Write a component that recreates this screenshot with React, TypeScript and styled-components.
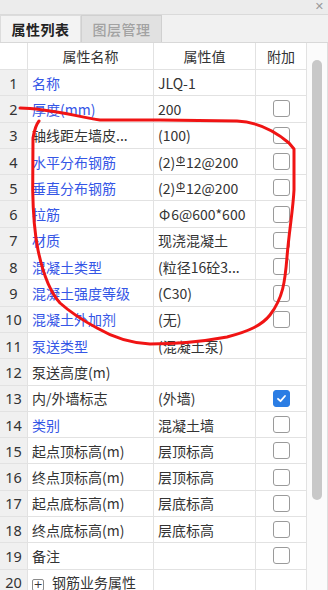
import React from "react";
import styled, { createGlobalStyle } from "styled-components";

const Global = createGlobalStyle`
  html, body { margin: 0; padding: 0; background: #ffffff; }
  body { font-family: "Noto Sans CJK SC", "Microsoft YaHei", "Noto Sans", sans-serif; }
`;

const Panel = styled.div`
  position: relative;
  width: 328px;
  height: 590px;
  overflow: hidden;
  background: #ffffff;
  font-size: 14px;
  color: #333;
`;

const TitleBar = styled.div`
  height: 14px;
  background: #ececec;
  border-bottom: 1px solid #dadada;
  display: flex;
  justify-content: flex-end;
  align-items: center;
  padding-right: 4px;
`;

const Close = styled.span`
  font-size: 11px;
  line-height: 14px;
  color: #9a9a9a;
  font-family: "DejaVu Sans", sans-serif;
`;

const TabBar = styled.div`
  height: 27px;
  background: #f1f1f1;
  border-bottom: 1px solid #d8d8d8;
  display: flex;
`;

const Tab = styled.div<{ $active?: boolean }>`
  width: 81px;
  box-sizing: border-box;
  border: 1px solid ${(p) => (p.$active ? "#dcdcdc" : "#d0d0d0")};
  border-bottom: none;
  background: ${(p) => (p.$active ? "#f3f3f3" : "#e1e1e1")};
  color: ${(p) => (p.$active ? "#222" : "#a2a2a2")};
  font-weight: ${(p) => (p.$active ? 700 : 500)};
  font-size: 14px;
  display: flex;
  align-items: center;
  justify-content: center;
  letter-spacing: 0.5px;
`;

const Body = styled.div`
  display: flex;
`;

const Table = styled.div`
  width: 307px;
`;

const Row = styled.div<{ $header?: boolean }>`
  display: grid;
  grid-template-columns: 28px 126px 102px 51px;
  height: ${(p) => (p.$header ? "27px" : "26.3px")};
  box-sizing: border-box;
`;

const Cell = styled.div<{ $center?: boolean }>`
  box-sizing: border-box;
  border-right: 1px solid #e2e2e2;
  border-bottom: 1px solid #e2e2e2;
  display: flex;
  align-items: center;
  justify-content: ${(p) => (p.$center ? "center" : "flex-start")};
  padding: 0 0 0 ${(p) => (p.$center ? "0" : "4px")};
  white-space: nowrap;
  overflow: hidden;
  min-width: 0;
`;

const NumCell = styled(Cell)`
  background: #f0f0f0;
  justify-content: center;
  padding: 0;
  color: #333;
  font-family: "Noto Sans", "Noto Sans CJK SC", sans-serif;
  font-size: 14.5px;
`;

const HeadCell = styled(Cell)`
  justify-content: center;
  padding: 0;
  color: #333;
`;

const NameText = styled.span<{ $blue?: boolean }>`
  color: ${(p) => (p.$blue ? "#3556e6" : "#333")};
`;

const ValueText = styled.span`
  color: #333;
`;

const Rebar = styled.span<{ $grade?: boolean }>`
  display: inline-block;
  position: relative;
  font-size: ${(p) => (p.$grade ? "11px" : "14px")};
  line-height: 1;
  margin: 0 1px;
  vertical-align: ${(p) => (p.$grade ? "4px" : "0")};
  border-bottom: ${(p) => (p.$grade ? "1px solid #333" : "none")};
`;

const Check = styled.span<{ $checked?: boolean }>`
  width: 17px;
  height: 17px;
  box-sizing: border-box;
  border-radius: 3px;
  border: 1.5px solid ${(p) => (p.$checked ? "#2b7de4" : "#9a9a9a")};
  background: ${(p) => (p.$checked ? "#2b7de4" : "#fff")};
  display: flex;
  align-items: center;
  justify-content: center;
`;

const PlusBox = styled.span`
  width: 12px;
  height: 12px;
  box-sizing: border-box;
  border: 1px solid #8a8a8a;
  border-radius: 2px;
  display: inline-flex;
  align-items: center;
  justify-content: center;
  font-size: 11px;
  line-height: 1;
  margin-right: 8px;
  color: #333;
  font-family: "DejaVu Sans", sans-serif;
`;

const ScrollTrack = styled.div`
  width: 21px;
  box-sizing: border-box;
  background: #fbfbfb;
  border-right: 1px solid #dedede;
  height: 547px;
  padding: 17px 0 0 5px;
`;

const ScrollThumb = styled.div`
  width: 10px;
  height: 440px;
  border-radius: 5px;
  background: #c8c8c8;
`;

const Overlay = styled.svg`
  position: absolute;
  left: 0;
  top: 0;
  pointer-events: none;
`;

type RowData = {
  name: React.ReactNode;
  blue?: boolean;
  value?: React.ReactNode;
  check?: "off" | "on";
};

const rows: RowData[] = [
  { name: "名称", blue: true, value: "JLQ-1" },
  { name: "厚度(mm)", blue: true, value: "200", check: "off" },
  { name: "轴线距左墙皮...", value: "(100)", check: "off" },
  {
    name: "水平分布钢筋",
    blue: true,
    value: (
      <>
        (2)<Rebar $grade>Φ</Rebar>12@200
      </>
    ),
    check: "off",
  },
  {
    name: "垂直分布钢筋",
    blue: true,
    value: (
      <>
        (2)<Rebar $grade>Φ</Rebar>12@200
      </>
    ),
    check: "off",
  },
  {
    name: "拉筋",
    blue: true,
    value: (
      <>
        <Rebar>Φ</Rebar>6@600*600
      </>
    ),
    check: "off",
  },
  { name: "材质", blue: true, value: "现浇混凝土", check: "off" },
  { name: "混凝土类型", blue: true, value: "(粒径16砼3...", check: "off" },
  { name: "混凝土强度等级", blue: true, value: "(C30)", check: "off" },
  { name: "混凝土外加剂", blue: true, value: "(无)", check: "off" },
  { name: "泵送类型", blue: true, value: "(混凝土泵)" },
  { name: "泵送高度(m)", value: "" },
  { name: "内/外墙标志", value: "(外墙)", check: "on" },
  { name: "类别", blue: true, value: "混凝土墙", check: "off" },
  { name: "起点顶标高(m)", value: "层顶标高", check: "off" },
  { name: "终点顶标高(m)", value: "层顶标高", check: "off" },
  { name: "起点底标高(m)", value: "层底标高", check: "off" },
  { name: "终点底标高(m)", value: "层底标高", check: "off" },
  { name: "备注", value: "", check: "off" },
  {
    name: (
      <>
        <PlusBox>+</PlusBox>钢筋业务属性
      </>
    ),
    value: "",
  },
];

const CheckMark = () => (
  <svg width="11" height="11" viewBox="0 0 11 11">
    <path d="M2 5.8 L4.5 8.2 L9 3" fill="none" stroke="#fff" strokeWidth="1.8" strokeLinecap="round" strokeLinejoin="round" />
  </svg>
);

const annotation =
  "M20,108 C 45,108 75,116 100,120 L 160,120 L 237,121 C 258,122 275,131 289,143 L 294,149 L 294,190 C 293,210 289,232 287,257 C 285,282 283,298 270,315 C 262,325 250,331 227,337 C 200,342 172,344 150,344 C 130,343 114,338 97,328 C 84,321 70,312 60,303 C 51,293 43,274 38,250 C 34,230 33,210 32.7,190 L 33,138 Q 35,126 39,121";

export default function App() {
  return (
    <>
      <Global />
      <Panel>
        <TitleBar>
          <Close>✕</Close>
        </TitleBar>
        <TabBar>
          <Tab $active>属性列表</Tab>
          <Tab>图层管理</Tab>
        </TabBar>
        <Body>
          <Table>
            <Row $header>
              <HeadCell />
              <HeadCell>属性名称</HeadCell>
              <HeadCell>属性值</HeadCell>
              <HeadCell>附加</HeadCell>
            </Row>
            {rows.map((r, i) => (
              <Row key={i}>
                <NumCell>{i + 1}</NumCell>
                <Cell>
                  <NameText $blue={r.blue}>{r.name}</NameText>
                </Cell>
                <Cell>
                  <ValueText>{r.value}</ValueText>
                </Cell>
                <Cell $center>
                  {r.check && (
                    <Check $checked={r.check === "on"}>{r.check === "on" && <CheckMark />}</Check>
                  )}
                </Cell>
              </Row>
            ))}
          </Table>
          <ScrollTrack>
            <ScrollThumb />
          </ScrollTrack>
        </Body>
        <Overlay width="328" height="590" viewBox="0 0 328 590">
          <path d={annotation} fill="none" stroke="#f01414" strokeWidth="3" strokeLinecap="round" strokeLinejoin="round" />
        </Overlay>
      </Panel>
    </>
  );
}
